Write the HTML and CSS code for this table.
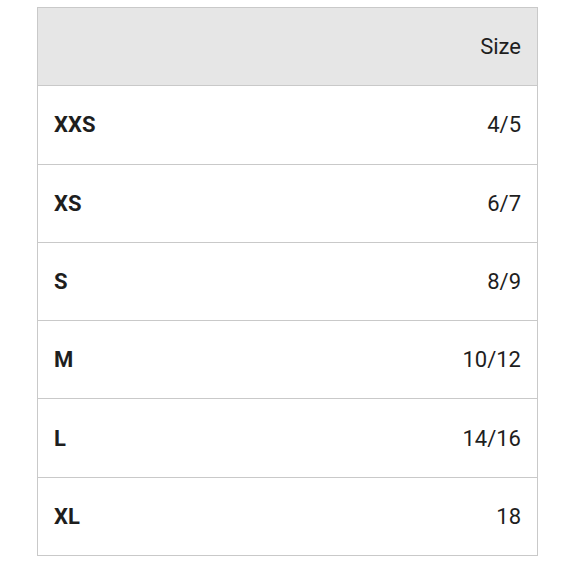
FILE: index.html
```html
<!DOCTYPE html>
<html>
<head>
<meta charset="utf-8">
<link rel="stylesheet" href="styles.css">
</head>
<body>
<div class="wrap">
<table class="sizes">
  <thead>
    <tr><th class="label"></th><th class="val">Size</th></tr>
  </thead>
  <tbody>
    <tr><td class="label">XXS</td><td class="val">4/5</td></tr>
    <tr><td class="label">XS</td><td class="val">6/7</td></tr>
    <tr><td class="label">S</td><td class="val">8/9</td></tr>
    <tr><td class="label">M</td><td class="val">10/12</td></tr>
    <tr><td class="label">L</td><td class="val">14/16</td></tr>
    <tr><td class="label">XL</td><td class="val">18</td></tr>
  </tbody>
</table>
</div>
</body>
</html>
```
FILE: styles.css
```css
html, body {
  margin: 0;
  padding: 0;
  background: #ffffff;
}
.wrap {
  padding: 7px 0 0 37px;
}
.sizes {
  width: 501px;
  border-collapse: collapse;
  font-family: Roboto, "Liberation Sans", sans-serif;
  font-size: 22px;
  color: #1e1e1e;
}
.sizes th, .sizes td {
  border: 1px solid #c9c9c9;
  height: 78.3px;
  padding: 0 16px;
  box-sizing: border-box;
  vertical-align: middle;
}
.sizes thead th {
  background: #e6e6e6;
  font-weight: 400;
}
.sizes .label {
  text-align: left;
  font-weight: 700;
  border-right: none;
}
.sizes .val {
  text-align: right;
  font-weight: 400;
  border-left: none;
}
```
